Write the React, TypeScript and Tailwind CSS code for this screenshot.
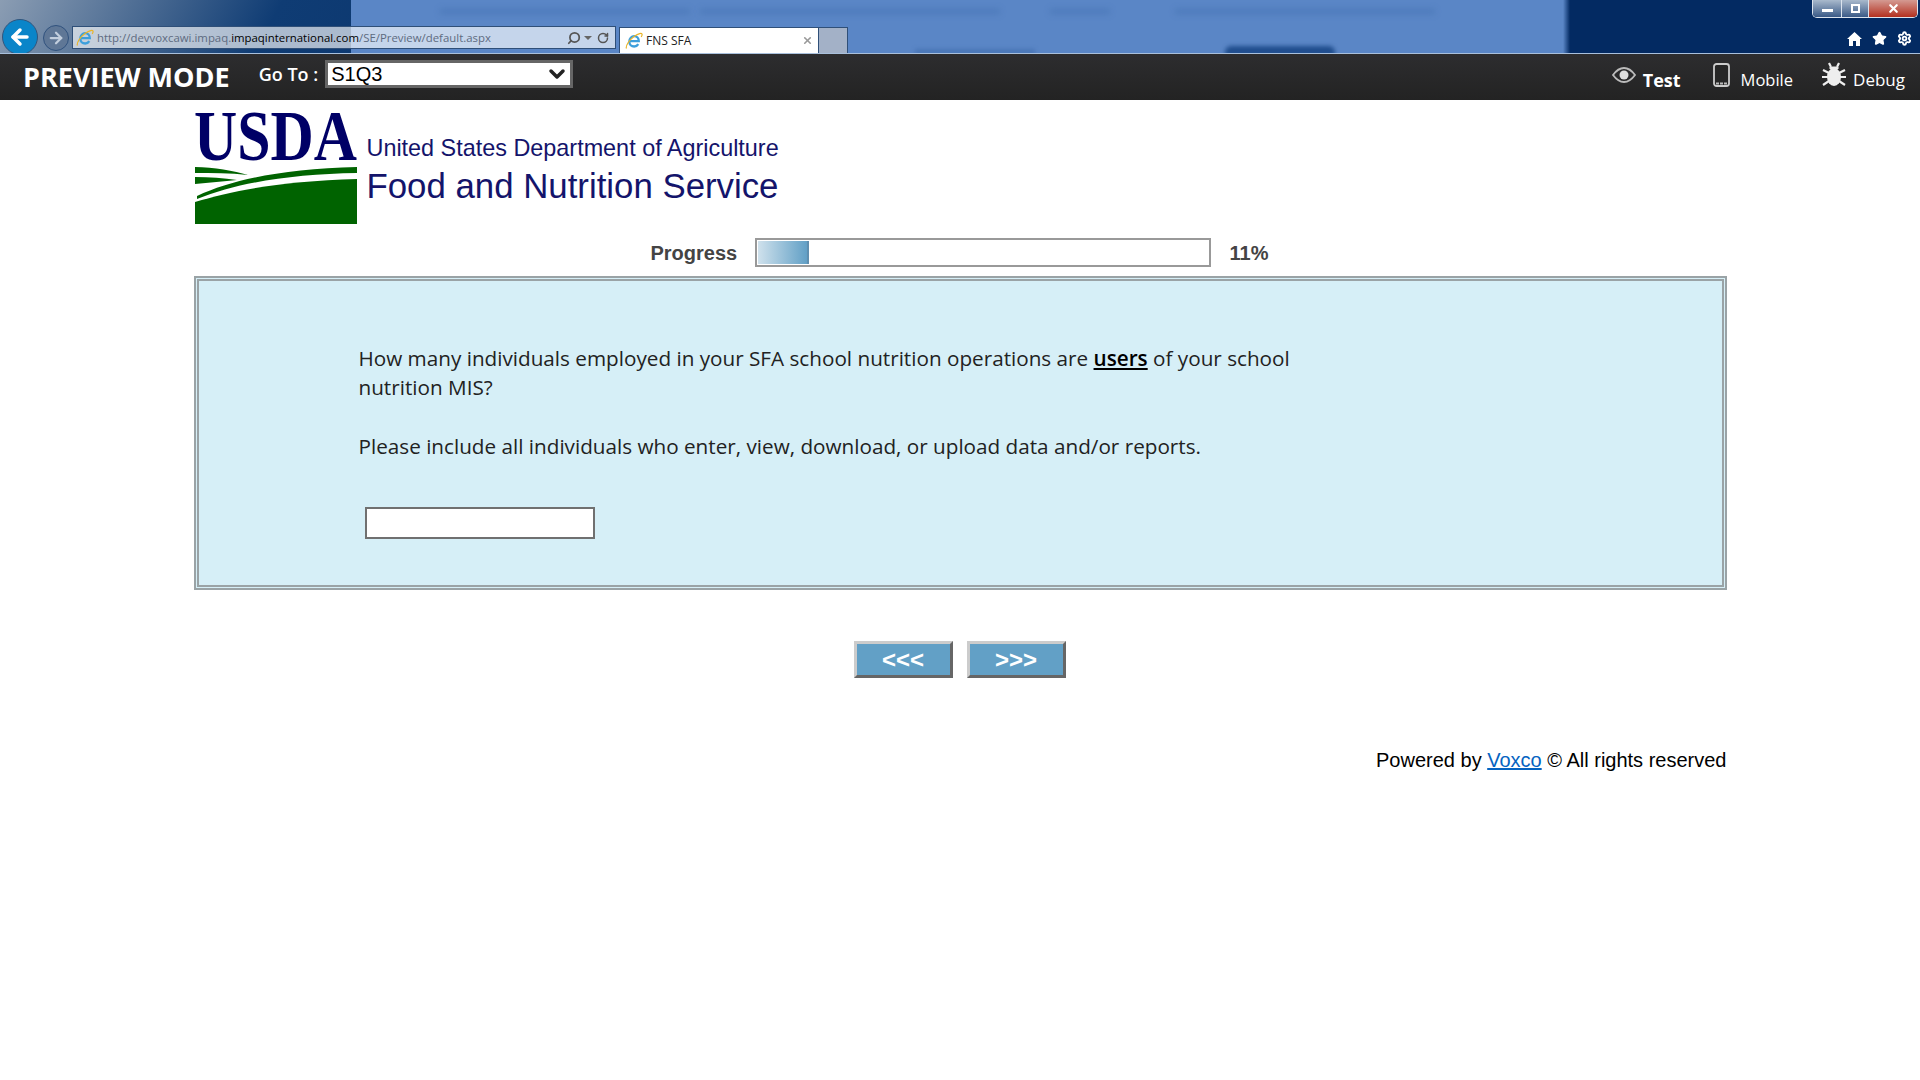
import { ArrowLeft, ArrowRight, ChevronDown, RotateCw, Search, Settings, Star, X } from "lucide-react";

function IeLogo() {
  return (
    <svg width="18" height="18" viewBox="0 0 18 18" className="shrink-0">
      <path d="M4.5 9.2h9.3c0-3-2-5-4.6-5S4.3 6.400 4.300 9.500s2.100 5 4.900 5c1.800 0 3.200-.8 4.100-2.300" fill="none" stroke="#3d9fdc" strokeWidth="2.300" />
      <path d="M1.500 16.500C.3 14.500 4 8 9 4.500s7.500-3.500 8-2.500c.4.900-.2 2-.8 3" fill="none" stroke="#e9b52a" strokeWidth="1.200" />
    </svg>
  );
}

function UsdaMark() {
  return (
    <svg width="164" height="113" viewBox="0 0 164 113" className="shrink-0 overflow-visible">
      <text x="0" y="47" fontFamily="'Liberation Serif', serif" fontSize="72" fontWeight="700" fill="#000066" textLength="163" lengthAdjust="spacingAndGlyphs">
        USDA
      </text>
      <path d="M1 89C40 77 90 68 163 66V111H1Z" fill="#006300" />
      <path d="M3 83C40 66 90 56 163 54V60C100 61 45 69 3 86Z" fill="#006300" />
      <path d="M1 54C20 54 40 58 54 62C36 60 18 60 1 60Z" fill="#006300" />
      <path d="M1 64C15 64 30 65 43 67C30 68 15 70 1 71Z" fill="#006300" />
    </svg>
  );
}

function EyeIcon() {
  return (
    <svg width="24" height="16" viewBox="0 0 24 16" className="-translate-y-[2px]">
      <path d="M1 8C5 2.500 9 1 12 1s7 1.500 11 7c-4 5.500-8 7-11 7S5 13.500 1 8Z" fill="none" stroke="#bbb" strokeWidth="1.800" />
      <circle cx="12" cy="8" r="4.500" fill="#ddd" />
    </svg>
  );
}

function PhoneIcon() {
  return (
    <svg width="17" height="24" viewBox="0 0 17 24" className="-translate-y-[2px]">
      <rect x="1" y="1" width="15" height="22" rx="2.500" fill="#262626" stroke="#ccc" strokeWidth="1.800" />
      <path d="M3 20.500h11" stroke="#bbb" strokeWidth="2" strokeDasharray="3 1" />
    </svg>
  );
}

function BugIcon() {
  return (
    <svg width="24" height="25" viewBox="0 0 24 25" className="-translate-y-[3px]">
      <ellipse cx="12" cy="15" rx="7" ry="9" fill="#eee" />
      <path d="M7 6c1-2 9-2 10 0l-2 2H9Z" fill="#eee" />
      <path d="M7 1l2 4M17 1l-2 4M1 8l6 3M23 8l-6 3M0 15h6M24 15h-6M1 23l6-4M23 23l-6-4" stroke="#eee" strokeWidth="2.200" />
    </svg>
  );
}

function HomeIcon() {
  return (
    <svg width="15" height="14" viewBox="0 0 15 14">
      <path d="M7.500 0 15 7h-2v7H9V9H6v5H2V7H0Z" fill="white" />
    </svg>
  );
}

export default function App() {
  return (
    <div className="min-h-screen bg-white font-['Liberation_Sans',sans-serif]">
      {/* browser chrome */}
      <div className="relative flex h-[54px] items-end overflow-hidden border-b border-[#a9c0dc] bg-[linear-gradient(90deg,transparent_351px,#5a86c6_351px,#5a86c6_1563px,transparent_1570px),linear-gradient(118deg,#8b9db3_0px,#0f3c74_250px,#032a62_800px,#032a62_1790px,#8e9eb2_1960px)]">
        {/* blurred page behind the glass */}
        <div className="absolute left-[440px] top-[9px] h-[5px] w-[250px] bg-[#2f5c9e]/30 blur-[3px]" />
        <div className="absolute left-[700px] top-[9px] h-[5px] w-[300px] bg-[#2f5c9e]/30 blur-[3px]" />
        <div className="absolute left-[1050px] top-[9px] h-[5px] w-[60px] bg-[#2f5c9e]/30 blur-[3px]" />
        <div className="absolute left-[1175px] top-[9px] h-[5px] w-[260px] bg-[#2f5c9e]/30 blur-[3px]" />
        <div className="absolute left-[1225px] top-[46px] h-[10px] w-[110px] rounded-t-[6px] bg-[#12407f]/80 blur-[2px]" />
        <div className="absolute left-[915px] top-[49px] h-[6px] w-[120px] bg-[#2f5c9e]/40 blur-[2px]" />

        <div className="relative flex items-end pl-[2px]">
          <div className="-mb-[2px] flex size-[36px] items-center justify-center rounded-full border border-[#33557c] bg-[#0a85c9]">
            <ArrowLeft className="size-[24px] text-white" strokeWidth={3.500} />
          </div>
          <div className="mb-[2px] ml-[5px] flex size-[26px] items-center justify-center rounded-full border border-[#30527e] bg-[#5f7796]">
            <ArrowRight className="size-[18px] text-[#c2cedd]" strokeWidth={3} />
          </div>
          <div className="mb-[4px] ml-[3px] flex h-[23px] w-[544px] items-center border border-[#2f4f78] bg-white/65 pl-[3px] pr-[6px] font-['Open_Sans',sans-serif] text-[11.400px] text-[#5e6b80]">
            <IeLogo />
            <span className="ml-[3px]">
              http://devvoxcawi.impaq.<span className="text-black">impaqinternational.com</span>/SE/Preview/default.aspx
            </span>
            <Search className="ml-auto size-[14px] -scale-x-100 text-[#555]" strokeWidth={3} />
            <span className="ml-[3px] h-0 w-0 border-x-[4px] border-t-[4px] border-x-transparent border-t-[#666]" />
            <RotateCw className="ml-[5px] size-[12px] text-[#555]" strokeWidth={3} />
          </div>
          <div className="ml-[3px] flex h-[26px] w-[200px] items-center border-x border-t border-[#2f4f78] bg-white pl-[5px] pr-[5px] font-['Open_Sans',sans-serif] text-[12px] text-[#222]">
            <IeLogo />
            <span className="ml-[3px]">FNS SFA</span>
            <X className="ml-auto size-[11px] text-[#999]" strokeWidth={3.500} />
          </div>
          <div className="h-[26px] w-[29px] border-r border-t border-[#2f4f78] bg-[#a3b1c7]" />
        </div>

        <div className="absolute right-[2px] top-0 flex h-[18px] overflow-hidden rounded-b-[5px] border border-t-0 border-[#dce4ee]">
          <div className="flex w-[29px] items-end justify-center border-r border-[#dce4ee] bg-[linear-gradient(#a9b9cc,#3a5a87)] pb-[5px]">
            <span className="h-[3px] w-[11px] bg-white" />
          </div>
          <div className="flex w-[27px] items-center justify-center border-r border-[#dce4ee] bg-[linear-gradient(#a9b9cc,#3a5a87)]">
            <span className="size-[9px] border-2 border-white" />
          </div>
          <div className="flex w-[48px] items-center justify-center bg-[linear-gradient(#d49a92,#b4301f)]">
            <X className="size-[13px] text-white" strokeWidth={4} />
          </div>
        </div>
        <div className="absolute bottom-[7px] right-[8px] flex items-center gap-[10px] text-white">
          <HomeIcon />
          <Star className="size-[15px]" fill="white" />
          <Settings className="size-[15px]" strokeWidth={3} />
        </div>
      </div>

      {/* preview bar */}
      <div className="flex h-[46px] items-center bg-[linear-gradient(#2d2d2f,#232323)] pl-[23px] pr-[15px] font-['Open_Sans',sans-serif] text-white">
        <span className="-translate-y-[1px] text-[27px] font-bold leading-none">PREVIEW MODE</span>
        <span className="ml-[29px] -translate-y-[3px] text-[18px] font-semibold">Go To :</span>
        <div className="ml-[7px] flex h-[28px] w-[248px] -translate-y-[3px] items-center justify-between border-[3px] border-[#666] bg-white pl-[3px] pr-[1px] font-['Liberation_Sans',sans-serif] text-[20px] text-black">
          <span>S1Q3</span>
          <ChevronDown className="size-[24px] text-[#222]" strokeWidth={3.500} />
        </div>
        <div className="ml-auto flex items-center text-[17px]">
          <EyeIcon />
          <span className="ml-[7px] translate-y-[3px] text-[18px] font-bold">Test</span>
          <span className="ml-[32px]">
            <PhoneIcon />
          </span>
          <span className="ml-[11px] translate-y-[3px] text-[16.500px]">Mobile</span>
          <span className="ml-[29px]">
            <BugIcon />
          </span>
          <span className="ml-[7px] translate-y-[3px]">Debug</span>
        </div>
      </div>

      <div className="mx-auto w-[1533px]">
        {/* logo */}
        <div className="flex pt-[13px]">
          <UsdaMark />
          <div className="ml-[9px] pt-[21px] text-[#14146b]">
            <p className="text-[23.400px] leading-[28px]">United States Department of Agriculture</p>
            <p className="mt-[4px] text-[34.800px] leading-[40px]">Food and Nutrition Service</p>
          </div>
        </div>

        {/* progress */}
        <div className="mt-[12px] flex h-[29px] items-center text-[20px] font-bold text-[#444]">
          <span className="ml-[457px] w-[104px]">Progress</span>
          <div className="h-[29px] w-[456px] border-[2px] border-[#999] bg-white p-[1px]">
            <div className="h-full w-[51px] border-r-[2px] border-[#5f8fb0] bg-[linear-gradient(90deg,#cfe1ec,#62a0c6)]" />
          </div>
          <span className="ml-[19px]">11%</span>
        </div>

        {/* question */}
        <div className="mt-[9px] h-[314px] border-[5px] border-double border-[#9aa3a6] bg-[#d6eff7] pl-[160px] pt-[63px] font-['Open_Sans',sans-serif] text-[20.700px] leading-[29px] text-[#222]">
          <p className="w-[960px]">
            How many individuals employed in your SFA school nutrition operations are{" "}
            <span className="font-semibold text-black underline">users</span> of your school nutrition MIS?
          </p>
          <p className="mt-[30px]">Please include all individuals who enter, view, download, or upload data and/or reports.</p>
          <input className="ml-[6px] mt-[46px] block h-[32px] w-[230px] border-[2px] border-[#707070] bg-white" />
        </div>

        {/* nav buttons */}
        <div className="mt-[51px] flex justify-center gap-[14px] pr-[1px]">
          <button className="h-[37px] w-[99px] border-[3px] border-b-[#666] border-l-[#ccc] border-r-[#666] border-t-[#ccc] bg-[#62a0c6] text-[24px] font-bold leading-none text-white">
            &lt;&lt;&lt;
          </button>
          <button className="h-[37px] w-[99px] border-[3px] border-b-[#666] border-l-[#ccc] border-r-[#666] border-t-[#ccc] bg-[#62a0c6] text-[24px] font-bold leading-none text-white">
            &gt;&gt;&gt;
          </button>
        </div>

        {/* footer */}
        <p className="mt-[67px] text-right text-[20px] text-black">
          Powered by <a href="#voxco" className="text-[#0563c1] underline">Voxco</a> © All rights reserved
        </p>
      </div>
    </div>
  );
}
